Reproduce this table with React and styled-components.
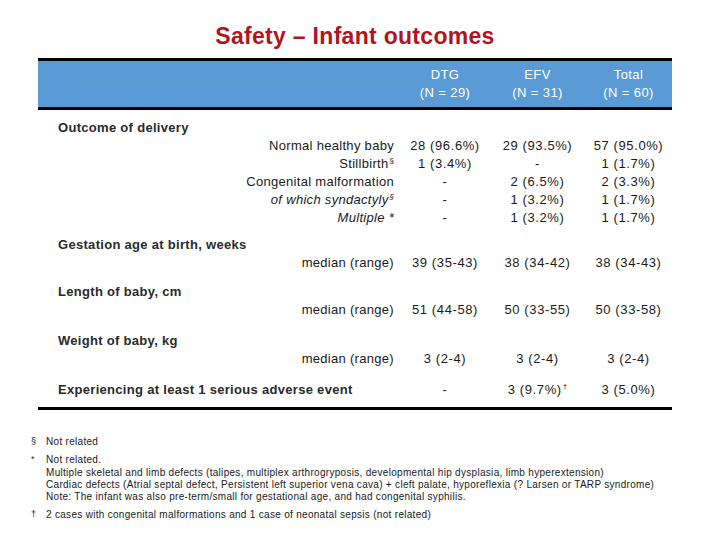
import styled, { createGlobalStyle } from "styled-components";

const COLOR = {
  title: "#B0141E",
  header: "#5B9BD5",
  text: "#1a1a1a",
  rule: "#000",
};

const GlobalStyle = createGlobalStyle`
  html, body {
    margin: 0;
    padding: 0;
    background: #fff;
  }
  body {
    font-family: "Liberation Sans", Arial, sans-serif;
    color: ${COLOR.text};
  }
`;

const COLUMNS = "362px 90px 95px 87px";

const groups = [
  {
    title: "Outcome of delivery",
    gap: 9,
    rows: [
      { label: "Normal healthy baby", values: ["28 (96.6%)", "29 (93.5%)", "57 (95.0%)"] },
      { label: "Stillbirth", sup: "§", values: ["1 (3.4%)", "-", "1 (1.7%)"] },
      { label: "Congenital malformation", values: ["-", "2 (6.5%)", "2 (3.3%)"] },
      { label: "of which syndactyly", sup: "§", italic: true, values: ["-", "1 (3.2%)", "1 (1.7%)"] },
      { label: "Multiple *", italic: true, values: ["-", "1 (3.2%)", "1 (1.7%)"] },
    ],
  },
  {
    title: "Gestation age at birth, weeks",
    gap: 9,
    rows: [{ label: "median (range)", values: ["39 (35-43)", "38 (34-42)", "38 (34-43)"] }],
  },
  {
    title: "Length of baby, cm",
    gap: 11,
    rows: [{ label: "median (range)", values: ["51 (44-58)", "50 (33-55)", "50 (33-58)"] }],
  },
  {
    title: "Weight of baby, kg",
    gap: 13,
    rows: [{ label: "median (range)", values: ["3 (2-4)", "3 (2-4)", "3 (2-4)"] }],
  },
];

const App = () => {
  return (
    <Page>
      <GlobalStyle />
      <Title>Safety – Infant outcomes</Title>
      <Table>
        <HeaderRow>
          <span />
          <HeadCell>DTG<br />(N = 29)</HeadCell>
          <HeadCell>EFV<br />(N = 31)</HeadCell>
          <HeadCell>Total<br />(N = 60)</HeadCell>
        </HeaderRow>
        <Body>
          {groups.map((group) => (
            <Group key={group.title} gap={group.gap}>
              <SectionLabel>{group.title}</SectionLabel>
              {group.rows.map((row) => (
                <Row key={row.label}>
                  <RowLabel italic={row.italic}>
                    {row.label}
                    {row.sup && <Sup>{row.sup}</Sup>}
                  </RowLabel>
                  {row.values.map((v, i) => (
                    <Cell key={i}>{v}</Cell>
                  ))}
                </Row>
              ))}
            </Group>
          ))}
          <Group gap={13}>
            <Row>
              <SectionLabel as="div">Experiencing at least 1 serious adverse event</SectionLabel>
              <Cell>-</Cell>
              <Cell>3 (9.7%)<Sup>†</Sup></Cell>
              <Cell>3 (5.0%)</Cell>
            </Row>
          </Group>
        </Body>
      </Table>
      <Notes>
        <Note>
          <Mark>§</Mark>
          <div>Not related</div>
        </Note>
        <Note>
          <Mark>*</Mark>
          <div>
            Not related.<br />
            Multiple skeletal and limb defects (talipes, multiplex arthrogryposis, developmental hip dysplasia, limb hyperextension)<br />
            Cardiac defects (Atrial septal defect, Persistent left superior vena cava) + cleft palate, hyporeflexia (? Larsen or TARP syndrome)<br />
            Note: The infant was also pre-term/small for gestational age, and had congenital syphilis.
          </div>
        </Note>
        <Note>
          <Mark>†</Mark>
          <div>2 cases with congenital malformations and 1 case of neonatal sepsis (not related)</div>
        </Note>
      </Notes>
    </Page>
  );
};

const Page = styled.div`
  width: 720px;
  height: 540px;
  overflow: hidden;
  padding-top: 22px;
  box-sizing: border-box;
`;

const Title = styled.h1`
  margin: 0;
  text-align: center;
  padding-right: 10px;
  font-size: 23px;
  line-height: 28px;
  font-weight: 700;
  letter-spacing: 0.3px;
  color: ${COLOR.title};
`;

const Table = styled.div`
  margin: 8px 0 0 38px;
  width: 634px;
  border-bottom: 3px solid ${COLOR.rule};
`;

const HeaderRow = styled.div`
  display: grid;
  grid-template-columns: ${COLUMNS};
  align-items: center;
  height: 46px;
  background: ${COLOR.header};
  border-top: 3px solid ${COLOR.rule};
  border-bottom: 3px solid ${COLOR.rule};
`;

const HeadCell = styled.div`
  text-align: center;
  color: #fff;
  font-size: 13px;
  line-height: 18px;
  letter-spacing: 0.4px;
`;

const Body = styled.div`
  padding-bottom: 8px;
`;

const Group = styled.div`
  margin-top: ${({ gap }) => gap}px;
`;

const SectionLabel = styled.div`
  padding-left: 20px;
  font-size: 13px;
  font-weight: 700;
  line-height: 18px;
  letter-spacing: 0.3px;
  color: #2a2a2a;
  white-space: nowrap;
`;

const Row = styled.div`
  display: grid;
  grid-template-columns: ${COLUMNS};
  align-items: center;
  height: 18px;
  font-size: 13px;
  line-height: 18px;
  letter-spacing: 0.3px;
`;

const RowLabel = styled.div`
  text-align: right;
  padding-right: 6px;
  font-style: ${({ italic }) => (italic ? "italic" : "normal")};
  white-space: nowrap;
`;

const Cell = styled.div`
  text-align: center;
  white-space: nowrap;
  letter-spacing: 0.6px;
`;

const Sup = styled.sup`
  font-size: 8px;
  line-height: 0;
  margin-left: 1px;
  letter-spacing: 0;
`;

const Notes = styled.div`
  margin-top: 26px;
  padding-left: 31px;
  font-size: 10px;
  line-height: 12.3px;
  letter-spacing: 0.3px;
`;

const Note = styled.div`
  display: grid;
  grid-template-columns: 15px 1fr;
  margin-bottom: 6px;
`;

const Mark = styled.span`
  font-size: 9px;
  line-height: 10px;
`;

export default App;
